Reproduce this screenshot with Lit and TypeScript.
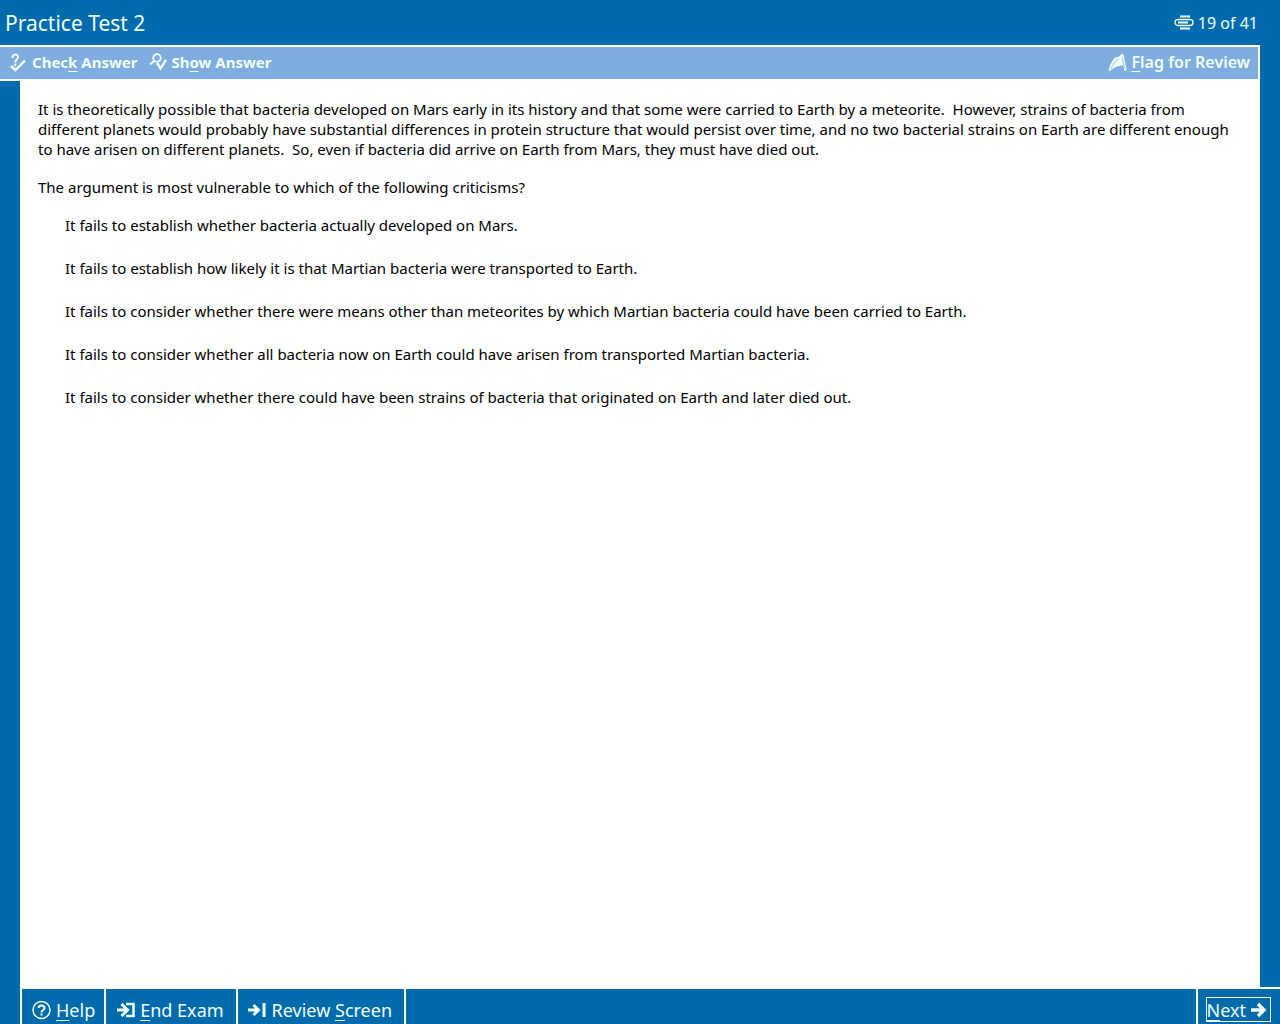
import { LitElement, html, css, svg } from "lit";
import { customElement, state } from "lit/decorators.js";

const checkAnswerIcon = svg`
  <path d="M2.500 5C2.500 0.500 8 0.500 8 4C8 6.500 5.200 6.500 5.200 9.500" stroke-width="2" />
  <path d="M5.200 10.500V13" stroke-width="2" />
  <path d="M1 13L5.500 17L15 7.500" stroke-width="2.400" />`;

const showAnswerIcon = svg`
  <circle cx="8" cy="5" r="3.800" stroke-width="1.800" />
  <path d="M5 8L1 11.500" stroke-width="2.200" />
  <path d="M8 10L11.500 15.500L17 7" stroke-width="2.400" />`;

const flagIcon = svg`
  <path d="M1 18C2 13 4 8 7 5C9 5 11.500 4 13 2L14.500 12C12 12 8 13 5 15Z" fill="currentColor" stroke-width="1" />
  <path d="M3 16C5 11 7 8 11 6" stroke="#80ade0" stroke-width="0.700" />
  <path d="M14 1L17.500 17.500" stroke-width="2.600" />
  <path d="M14.200 4L16.800 16" stroke="#80ade0" stroke-width="0.700" />`;

const progressIcon = svg`
  <path d="M6 1.500H16M6 13.500H16" stroke-width="2" />
  <rect x="1" y="4.500" width="18" height="6" rx="3" stroke-width="1.300" />
  <path d="M4 7.500H14" stroke-width="2" />`;

const helpIcon = svg`
  <circle cx="9.500" cy="10" r="8.500" stroke-width="1.500" />
  <path d="M6.500 8C6.500 4.500 12.500 4.500 12.500 8C12.500 10 9.500 10 9.500 12.500" stroke-width="2" />
  <path d="M9.500 13.500V15.500" stroke-width="2" />`;

const endExamIcon = svg`
  <path d="M1 8H11M5.500 2L11.500 8L5.500 14" stroke-width="3" />
  <path d="M10 2H17.500V14H10" stroke-width="2.600" />`;

const reviewIcon = svg`
  <path d="M0 8H10M5.500 3L10.500 8L5.500 13" stroke-width="3" />
  <path d="M16 1V15" stroke-width="3" />`;

const nextIcon = svg`
  <path d="M1 8H14M8 2L14 8L8 14" stroke-width="3.400" />`;

const icon = (shape: unknown, width: number, height: number) => html`
  <svg width=${width} height=${height} viewBox="0 0 ${width} ${height}" aria-hidden="true"
    fill="none" stroke="currentColor">${shape}</svg>`;

@customElement("app-root")
export class AppRoot extends LitElement {
  static styles = css`
    :host {
      display: flex;
      flex-direction: column;
      min-height: 100vh;
      background: #006bac;
      color: #f0ffff;
      font-family: "Noto Sans", Tahoma, sans-serif;
      font-size: 16px;
      line-height: 20px;
    }
    * { box-sizing: border-box; }
    svg { display: block; flex: none; }
    u { text-underline-offset: 3px; text-decoration-thickness: 1px; text-decoration-skip-ink: none; }
    button {
      display: flex;
      align-items: center;
      margin: 0;
      padding: 0;
      border: 0;
      background: none;
      color: inherit;
      font: inherit;
      white-space: nowrap;
      cursor: pointer;
    }
    .header {
      display: flex;
      align-items: center;
      justify-content: space-between;
      height: 45px;
      padding: 0 22px 0 5px;
    }
    .title { margin: 0; font-size: 21px; font-weight: 400; line-height: 24px; }
    .progress { display: flex; align-items: center; gap: 4px; }
    .toolbar {
      display: flex;
      justify-content: space-between;
      align-items: center;
      height: 36px;
      margin-right: 20px;
      padding: 0 8px 2px 10px;
      background: #80ade0;
      border: 2px solid #fff;
      border-left: 0;
      font-weight: 600;
    }
    .tools { display: flex; gap: 12px; font-size: 15px; font-weight: 700; }
    .tools button, .flag { gap: 4px; }
    .frame { display: flex; flex: 1; padding-left: 20px; }
    .question {
      flex: 1;
      min-width: 0;
      padding: 18px 24px 18px 18px;
      background: #fff;
      color: #000;
      font-size: 15px;
    }
    .question p { margin: 0 0 18px; white-space: pre-wrap; }
    .rail { width: 20px; border-bottom: 2px solid #fff; }
    .options {
      display: flex;
      flex-direction: column;
      gap: 23px;
      margin: 0;
      padding: 0 0 0 27px;
      list-style: none;
    }
    .footer {
      display: flex;
      height: 35px;
      margin-left: 20px;
      border-left: 2px solid #fff;
      font-size: 18px;
    }
    .footer .nav { gap: 5px; padding: 6px 12px 0 10px; border-right: 2px solid #fff; }
    .footer .nav:first-child { padding-right: 9px; }
    .footer .next {
      margin-left: auto;
      padding: 6px 9px 0 8px;
      border-left: 2px solid #fff;
    }
    .focus {
      display: flex;
      align-items: center;
      gap: 4px;
      height: 25px;
      padding: 0 3px 0 0;
      border: 1px solid #f0ffff;
    }
  `;

  @state() private current = 19;
  private total = 41;

  private options = [
    "It fails to establish whether bacteria actually developed on Mars.",
    "It fails to establish how likely it is that Martian bacteria were transported to Earth.",
    "It fails to consider whether there were means other than meteorites by which Martian bacteria could have been carried to Earth.",
    "It fails to consider whether all bacteria now on Earth could have arisen from transported Martian bacteria.",
    "It fails to consider whether there could have been strains of bacteria that originated on Earth and later died out.",
  ];

  render() {
    return html`
      <header class="header">
        <h1 class="title">Practice Test 2</h1>
        <div class="progress">${icon(progressIcon, 20, 15)}<span>${this.current} of ${this.total}</span></div>
      </header>
      <div class="toolbar">
        <div class="tools">
          <button type="button">${icon(checkAnswerIcon, 18, 19)}<span>Chec<u>k</u> Answer</span></button>
          <button type="button">${icon(showAnswerIcon, 18, 18)}<span>Sh<u>o</u>w Answer</span></button>
        </div>
        <button type="button" class="flag">${icon(flagIcon, 19, 19)}<span><u>F</u>lag for Review</span></button>
      </div>
      <div class="frame">
        <main class="question">
          <p>It is theoretically possible that bacteria developed on Mars early in its history and that some were carried to Earth by a meteorite.  However, strains of bacteria from different planets would probably have substantial differences in protein structure that would persist over time, and no two bacterial strains on Earth are different enough to have arisen on different planets.  So, even if bacteria did arrive on Earth from Mars, they must have died out.</p>
          <p>The argument is most vulnerable to which of the following criticisms?</p>
          <ul class="options">${this.options.map((text) => html`<li>${text}</li>`)}</ul>
        </main>
        <div class="rail"></div>
      </div>
      <footer class="footer">
        <button type="button" class="nav">${icon(helpIcon, 19, 20)}<span><u>H</u>elp</span></button>
        <button type="button" class="nav">${icon(endExamIcon, 19, 16)}<span><u>E</u>nd Exam</span></button>
        <button type="button" class="nav">${icon(reviewIcon, 19, 16)}<span>Review <u>S</u>creen</span></button>
        <button type="button" class="next"><span class="focus"><span><u>N</u>ext</span>${icon(nextIcon, 17, 16)}</span></button>
      </footer>
    `;
  }
}
